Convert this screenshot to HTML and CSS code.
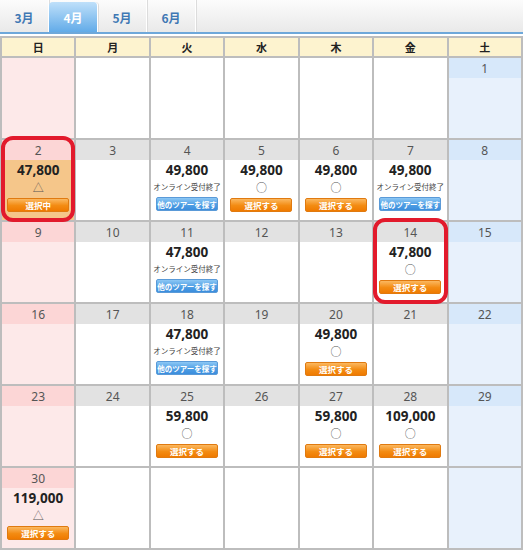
FILE: index.html
```html
<!DOCTYPE html>
<html lang="ja">
<head>
<meta charset="utf-8">
<link rel="stylesheet" href="styles.css">
</head>
<body>
<div class="wrap">
  <div class="tabs">
    <div class="tab">3月</div>
    <div class="tab active">4月</div>
    <div class="tab">5月</div>
    <div class="tab">6月</div>
  </div>
  <div class="cal">
    <div class="hd">日</div><div class="hd">月</div><div class="hd">火</div><div class="hd">水</div><div class="hd">木</div><div class="hd">金</div><div class="hd">土</div>

    <div class="c sun blank"></div>
    <div class="c blank"></div>
    <div class="c blank"></div>
    <div class="c blank"></div>
    <div class="c blank"></div>
    <div class="c blank"></div>
    <div class="c sat"><div class="d">1</div></div>

    <div class="c sun sel ring"><div class="d">2</div><div class="b"><div class="p">47,800</div><div class="m">△</div><div class="btn or">選択中</div></div></div>
    <div class="c"><div class="d">3</div></div>
    <div class="c"><div class="d">4</div><div class="b"><div class="p">49,800</div><div class="t">オンライン受付終了</div><div class="btn bl">他のツアーを探す</div></div></div>
    <div class="c"><div class="d">5</div><div class="b"><div class="p">49,800</div><div class="m">○</div><div class="btn or">選択する</div></div></div>
    <div class="c"><div class="d">6</div><div class="b"><div class="p">49,800</div><div class="m">○</div><div class="btn or">選択する</div></div></div>
    <div class="c"><div class="d">7</div><div class="b"><div class="p">49,800</div><div class="t">オンライン受付終了</div><div class="btn bl">他のツアーを探す</div></div></div>
    <div class="c sat"><div class="d">8</div></div>

    <div class="c sun"><div class="d">9</div></div>
    <div class="c"><div class="d">10</div></div>
    <div class="c"><div class="d">11</div><div class="b"><div class="p">47,800</div><div class="t">オンライン受付終了</div><div class="btn bl">他のツアーを探す</div></div></div>
    <div class="c"><div class="d">12</div></div>
    <div class="c"><div class="d">13</div></div>
    <div class="c ring"><div class="d">14</div><div class="b"><div class="p">47,800</div><div class="m">○</div><div class="btn or">選択する</div></div></div>
    <div class="c sat"><div class="d">15</div></div>

    <div class="c sun"><div class="d">16</div></div>
    <div class="c"><div class="d">17</div></div>
    <div class="c"><div class="d">18</div><div class="b"><div class="p">47,800</div><div class="t">オンライン受付終了</div><div class="btn bl">他のツアーを探す</div></div></div>
    <div class="c"><div class="d">19</div></div>
    <div class="c"><div class="d">20</div><div class="b"><div class="p">49,800</div><div class="m">○</div><div class="btn or">選択する</div></div></div>
    <div class="c"><div class="d">21</div></div>
    <div class="c sat"><div class="d">22</div></div>

    <div class="c sun"><div class="d">23</div></div>
    <div class="c"><div class="d">24</div></div>
    <div class="c"><div class="d">25</div><div class="b"><div class="p">59,800</div><div class="m">○</div><div class="btn or">選択する</div></div></div>
    <div class="c"><div class="d">26</div></div>
    <div class="c"><div class="d">27</div><div class="b"><div class="p">59,800</div><div class="m">○</div><div class="btn or">選択する</div></div></div>
    <div class="c"><div class="d">28</div><div class="b"><div class="p">109,000</div><div class="m">○</div><div class="btn or">選択する</div></div></div>
    <div class="c sat"><div class="d">29</div></div>

    <div class="c sun"><div class="d">30</div><div class="b"><div class="p">119,000</div><div class="m">△</div><div class="btn or">選択する</div></div></div>
    <div class="c blank"></div>
    <div class="c blank"></div>
    <div class="c blank"></div>
    <div class="c blank"></div>
    <div class="c blank"></div>
    <div class="c sat blank"></div>
  </div>
</div>
</body>
</html>
```
FILE: styles.css
```css
html, body {
  margin: 0;
  padding: 0;
  background: #fff;
}
body {
  font-family: "Noto Sans", "Noto Sans CJK JP", sans-serif;
  color: #333;
}
.wrap {
  width: 523px;
}
.tabs {
  display: flex;
  height: 32px;
  background: linear-gradient(#fcfcfc, #e9e9e9);
  border-bottom: 2px solid #6ea8da;
  box-sizing: content-box;
}
.tab {
  width: 49px;
  display: flex;
  align-items: center;
  justify-content: center;
  font-family: "Noto Sans CJK JP", sans-serif;
  font-weight: bold;
  font-size: 12px;
  color: #3f78b4;
  border-right: 1px solid #fff;
  box-shadow: 1px 0 0 #dcdcdc;
  padding-top: 2px;
  box-sizing: border-box;
}
.tab.active {
  margin-top: 2px;
  padding-top: 0;
  background: linear-gradient(#bfe0fa, #62abe8);
  color: #fff;
  border-radius: 4px 4px 0 0;
}
.cal {
  margin-top: 2px;
  display: grid;
  grid-template-columns: repeat(7, 1fr);
  grid-template-rows: 18px repeat(6, 80px);
  gap: 2px;
  background: #bdbdbd;
  border: 2px solid #bdbdbd;
}
.hd {
  background: #fdf3cf;
  font-family: "Noto Sans CJK JP", sans-serif;
  font-weight: bold;
  font-size: 11px;
  color: #222;
  display: flex;
  align-items: center;
  justify-content: center;
}
.c {
  background: #fff;
  display: flex;
  flex-direction: column;
  position: relative;
}
.c .d {
  height: 20px;
  background: #e2e2e2;
  display: flex;
  align-items: center;
  justify-content: center;
  font-size: 12px;
  color: #555;
}
.c.sun { background: #fde9e9; }
.c.sun .d { background: #fcd6d6; }
.c.sat { background: #e8f1fc; }
.c.sat .d { background: #d7e8fa; }
.c.sel .b { background: #f5c68a; }
.b {
  flex: 1;
  display: flex;
  flex-direction: column;
  align-items: center;
  padding-top: 2px;
}
.p {
  font-weight: bold;
  font-size: 13.5px;
  line-height: 16px;
  color: #222;
}
.m {
  font-family: "Noto Sans CJK JP", sans-serif;
  font-size: 11px;
  line-height: 16px;
  margin-top: 1px;
  color: #555;
}
.t {
  font-family: "Noto Sans CJK JP", sans-serif;
  font-size: 7.5px;
  line-height: 14px;
  margin-top: 2px;
  color: #444;
  white-space: nowrap;
}
.btn {
  width: 62px;
  height: 14px;
  box-sizing: border-box;
  border-radius: 2px;
  display: flex;
  align-items: center;
  justify-content: center;
  font-family: "Noto Sans CJK JP", sans-serif;
  font-weight: bold;
  font-size: 8.5px;
  color: #fff;
  white-space: nowrap;
}
.m + .btn { margin-top: 3px; }
.t + .btn { margin-top: 3px; }
.btn.or {
  background: linear-gradient(#fbb860, #f38b12 55%, #ef7a00);
  border: 1px solid #e07a10;
}
.btn.bl {
  background: linear-gradient(#8cc7f5, #4f9fe4 55%, #3b8ddc);
  border: 1px solid #5a9ad8;
  font-size: 7.5px;
}
.ring::after {
  content: "";
  position: absolute;
  left: -1px;
  right: -1px;
  top: -4px;
  bottom: -2px;
  border: 4px solid #e21a2c;
  border-radius: 12px;
  pointer-events: none;
}
```
